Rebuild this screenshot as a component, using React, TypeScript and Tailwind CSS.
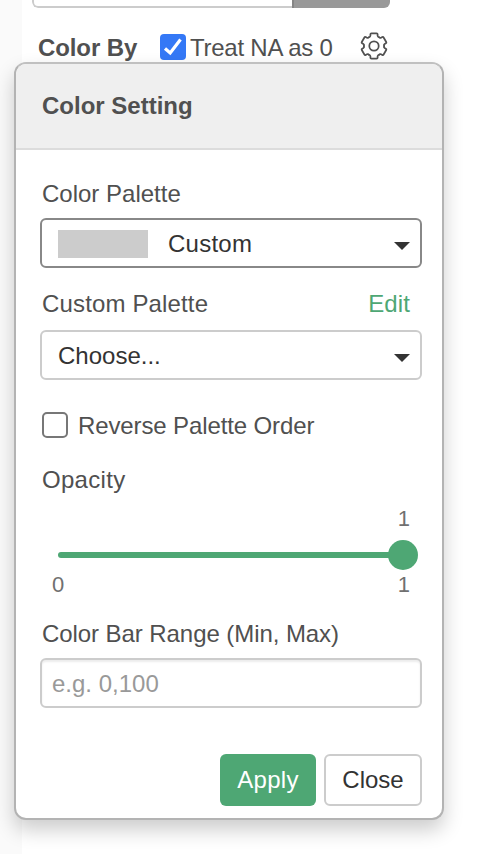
import type { ReactNode } from "react";

function Gear() {
  const tooth = "M-5.05 -8.75 Q-3.7 -8.9 -3.6 -10.2 V-11.7 Q-3.6 -12.6 -2.6 -12.6 H2.6 Q3.6 -12.6 3.6 -11.7 V-10.2 Q3.7 -8.9 5.05 -8.75";
  return (
    <svg className="h-7 w-7" viewBox="-14 -14 28 28" fill="none" stroke="#505050" strokeWidth="1.75" strokeLinecap="round">
      <circle r="4.7" />
      {[0, 60, 120, 180, 240, 300].map((a) => (
        <path key={a} d={tooth} transform={`rotate(${a})`} />
      ))}
    </svg>
  );
}

function Caret() {
  return (
    <svg className="h-2 w-4" viewBox="0 0 16 8" fill="#333">
      <path d="M0 0H16L8 8Z" />
    </svg>
  );
}

function Label({ children }: { children: ReactNode }) {
  return <span className="pl-0.5 leading-7">{children}</span>;
}

export default function App() {
  return (
    <div className="relative flex h-[854px] w-[504px] overflow-hidden bg-white font-['Liberation_Sans',Arial,sans-serif] text-2xl whitespace-nowrap text-[#505050]">
      <div className="w-[22px] shrink-0 bg-[#fafafa]" />
      <div className="flex flex-1 flex-col">
        <div className="ml-[10px] flex h-2 w-[358px] overflow-hidden rounded-b-md">
          <div className="flex-1 rounded-bl-md border-b-2 border-l-2 border-[#ccc]" />
          <div className="w-[98px] border-l-2 border-[#858585] bg-[#999]" />
        </div>
        <div className="mt-6 ml-4 flex h-8 items-center">
          <b className="w-[122px] tracking-[-0.1px]">Color By</b>
          <span className="-mt-0.5 flex h-[26px] w-[26px] items-center justify-center rounded bg-[#3478f6]">
            <svg className="h-[18px] w-[20px]" viewBox="0 0 20 18" fill="none" stroke="white" strokeWidth="3.2">
              <path d="M2 10.5L7.2 15L17.5 1.5" />
            </svg>
          </span>
          <span className="ml-1 w-[170px] tracking-[-0.25px]">Treat NA as 0</span>
          <span className="-mt-1"><Gear /></span>
        </div>
      </div>

      <section className="absolute top-[62px] left-[14px] flex h-[758px] w-[430px] flex-col rounded-xl border-2 border-[#b3b3b3] border-t-[#c0c0c0] bg-white shadow-[0_10px_20px_rgba(0,0,0,0.2)]">
        <header className="flex h-[86px] shrink-0 items-center rounded-t-[10px] border-b-2 border-[#dcdcdc] bg-[#efefef] pl-[26px] font-bold">
          <span>Color Setting</span>
        </header>
        <div className="flex flex-col pt-[30px] pr-5 pl-6">
          <Label>Color Palette</Label>
          <div className="mt-[10px] flex h-[50px] items-center rounded-md border-2 border-[#888] pr-[10px] pl-4 text-[#333]">
            <span className="mt-0.5 h-7 w-[90px] bg-[#ccc]" />
            <span className="ml-5 flex-1 pt-0.5 tracking-[0.25px]">Custom</span>
            <span className="flex pt-1.5"><Caret /></span>
          </div>
          <div className="mt-[22px] flex justify-between pr-3 leading-7">
            <span className="tracking-[0.15px]"><Label>Custom Palette</Label></span>
            <span className="tracking-[0.1px] text-[#4ea774]">Edit</span>
          </div>
          <div className="mt-3 flex h-[50px] items-center justify-between rounded-md border-2 border-[#ccc] pr-[10px] pl-4 text-[#333]">
            <span className="pt-0.5">Choose...</span>
            <span className="flex pt-1.5"><Caret /></span>
          </div>
          <div className="mt-8 flex h-7 items-center pl-0.5">
            <span className="-mt-0.5 h-[26px] w-[26px] rounded-[5px] border-2 border-[#777]" />
            <span className="ml-[10px] tracking-[-0.12px]">Reverse Palette Order</span>
          </div>
          <div className="mt-[26px] flex tracking-[0.3px]"><Label>Opacity</Label></div>
          <div className="mt-[13px] flex h-6 justify-end pr-3 text-[22px] leading-6 text-[#707070]">1</div>
          <div className="mt-[9px] mr-1 ml-[18px] flex h-[30px] items-center">
            <span className="h-1.5 flex-1 rounded-l-full bg-[#4ea774]" />
            <span className="-ml-1 h-[30px] w-[30px] rounded-full bg-[#4ea774]" />
          </div>
          <div className="mt-[3px] flex h-6 justify-between pr-3 pl-3 text-[22px] leading-6 text-[#707070]">
            <span>0</span>
            <span>1</span>
          </div>
          <div className="mt-[23px] flex tracking-[-0.07px]"><Label>Color Bar Range (Min, Max)</Label></div>
          <div className="mt-[10px] flex h-[50px] items-center rounded-md border-2 border-[#ccc] pt-0.5 pl-[10px] text-[#999] shadow-[inset_0_2px_2px_rgba(0,0,0,0.075)]">
            e.g. 0,100
          </div>
          <div className="mt-[46px] flex justify-end gap-2">
            <button className="h-[52px] w-24 rounded-md bg-[#4ea774] tracking-[0.3px] text-white">Apply</button>
            <button className="h-[52px] w-[98px] rounded-md border-2 border-[#ccc] bg-white text-[#333]">Close</button>
          </div>
        </div>
      </section>
    </div>
  );
}
